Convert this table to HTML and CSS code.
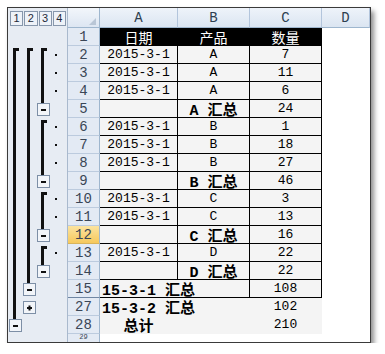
FILE: index.html
```html
<!DOCTYPE html>
<html lang="zh">
<head>
<meta charset="utf-8">
<title>分类汇总</title>
<link rel="stylesheet" href="styles.css">
</head>
<body>
<div class="window">
  <div class="sheet">
    <div class="levels">
      <span class="lvl">1</span><span class="lvl">2</span><span class="lvl">3</span><span class="lvl">4</span>
    </div>
    <div class="corner">
      <svg width="7" height="7" viewBox="0 0 7 7"><polygon points="7,0 7,7 0,7" fill="#b9c6d6"/></svg>
    </div>
    <div class="ch">A</div><div class="ch">B</div><div class="ch">C</div><div class="ch">D</div>

    <div class="outline">
      <svg width="59" height="314" viewBox="0 0 59 314">
        <g fill="#111">
          <rect x="5" y="20" width="3" height="271"/><rect x="5" y="20" width="6" height="3"/>
          <rect x="19" y="20" width="3" height="235"/><rect x="19" y="20" width="6" height="3"/>
          <rect x="33" y="20" width="3" height="56"/><rect x="33" y="20" width="6" height="3"/>
          <rect x="33" y="92" width="3" height="56"/><rect x="33" y="92" width="6" height="3"/>
          <rect x="33" y="164" width="3" height="38"/><rect x="33" y="164" width="6" height="3"/>
          <rect x="33" y="218" width="3" height="20"/><rect x="33" y="218" width="6" height="3"/>
          <rect x="47" y="26" width="2" height="2"/><rect x="47" y="44" width="2" height="2"/><rect x="47" y="62" width="2" height="2"/>
          <rect x="47" y="98" width="2" height="2"/><rect x="47" y="116" width="2" height="2"/><rect x="47" y="134" width="2" height="2"/>
          <rect x="47" y="170" width="2" height="2"/><rect x="47" y="188" width="2" height="2"/>
          <rect x="47" y="224" width="2" height="2"/>
        </g>
        <g fill="#f2f5f9" stroke="#7d8fa6" stroke-width="1">
          <rect x="29.5" y="75.5" width="12" height="12"/>
          <rect x="29.5" y="147.5" width="12" height="12"/>
          <rect x="29.5" y="201.5" width="12" height="12"/>
          <rect x="29.5" y="237.5" width="12" height="12"/>
          <rect x="15.5" y="255.5" width="12" height="12"/>
          <rect x="15.5" y="273.5" width="12" height="12"/>
          <rect x="1.5" y="291.5" width="12" height="12"/>
        </g>
        <g fill="#111">
          <rect x="33" y="81" width="5" height="2"/>
          <rect x="33" y="153" width="5" height="2"/>
          <rect x="33" y="207" width="5" height="2"/>
          <rect x="33" y="243" width="5" height="2"/>
          <rect x="19" y="261" width="5" height="2"/>
          <rect x="19" y="279" width="5" height="2"/><rect x="20.5" y="277.5" width="2" height="5"/>
          <rect x="5" y="297" width="5" height="2"/>
        </g>
      </svg>
    </div>

    <div class="rh">1</div><div class="c hd">日期</div><div class="c hd">产品</div><div class="c hd">数量</div><div class="d"></div>
    <div class="rh">2</div><div class="c">2015-3-1</div><div class="c">A</div><div class="c">7</div><div class="d"></div>
    <div class="rh">3</div><div class="c">2015-3-1</div><div class="c">A</div><div class="c">11</div><div class="d"></div>
    <div class="rh">4</div><div class="c">2015-3-1</div><div class="c">A</div><div class="c">6</div><div class="d"></div>
    <div class="rh">5</div><div class="c"></div><div class="c sum">A 汇总</div><div class="c">24</div><div class="d"></div>
    <div class="rh">6</div><div class="c">2015-3-1</div><div class="c">B</div><div class="c">1</div><div class="d"></div>
    <div class="rh">7</div><div class="c">2015-3-1</div><div class="c">B</div><div class="c">18</div><div class="d"></div>
    <div class="rh">8</div><div class="c">2015-3-1</div><div class="c">B</div><div class="c">27</div><div class="d"></div>
    <div class="rh">9</div><div class="c"></div><div class="c sum">B 汇总</div><div class="c">46</div><div class="d"></div>
    <div class="rh">10</div><div class="c">2015-3-1</div><div class="c">C</div><div class="c">3</div><div class="d"></div>
    <div class="rh">11</div><div class="c">2015-3-1</div><div class="c">C</div><div class="c">13</div><div class="d"></div>
    <div class="rh act">12</div><div class="c"></div><div class="c sum">C 汇总</div><div class="c">16</div><div class="d"></div>
    <div class="rh">13</div><div class="c">2015-3-1</div><div class="c">D</div><div class="c">22</div><div class="d"></div>
    <div class="rh">14</div><div class="c"></div><div class="c sum">D 汇总</div><div class="c">22</div><div class="d"></div>
    <div class="rh hid">15</div><div class="c sum wide">15-3-1 汇总</div><div class="c">108</div><div class="d"></div>
    <div class="rh">27</div><div class="c sum wide nb">15-3-2 汇总</div><div class="c nb">102</div><div class="d"></div>
    <div class="rh">28</div><div class="c sum nb">总计</div><div class="c nb"></div><div class="c nb">210</div><div class="d"></div>
    <div class="rh last">29</div><div class="d"></div><div class="d"></div><div class="d"></div><div class="d"></div>
  </div>
</div>
</body>
</html>
```

FILE: styles.css
```css
html, body {
  margin: 0;
  padding: 0;
  background: #fff;
}

.window {
  margin: 7px 0 0 7px;
  width: 364px;
  height: 336px;
  box-sizing: border-box;
  border: 1px solid #3a3a3a;
  box-shadow: 3px 4px 5px rgba(0, 0, 0, 0.45);
  overflow: hidden;
  background: #fff;
}

.sheet {
  display: grid;
  grid-template-columns: 60px 32px 78px 72px 72px 48px;
  grid-template-rows: 20px repeat(18, 18px);
  font-family: "Liberation Mono", "Noto Sans CJK SC", monospace;
  font-size: 13px;
  color: #000;
}

.levels {
  background: #e7ecf3;
  border-right: 1px solid #a9b9cd;
  display: flex;
  align-items: center;
  padding: 1px 0 0 2px;
  box-sizing: border-box;
}

.lvl {
  width: 12px;
  height: 13px;
  border: 1px solid #8797ac;
  background: #eef2f8;
  font-family: "Liberation Sans", sans-serif;
  font-size: 11px;
  line-height: 13px;
  text-align: center;
  color: #1e2a3a;
  margin-right: 1px;
}

.corner {
  background: linear-gradient(#f2f6fb, #dde6f2);
  border-right: 1px solid #9eb6ce;
  border-bottom: 1px solid #9eb6ce;
  box-sizing: border-box;
  display: flex;
  justify-content: flex-end;
  align-items: flex-end;
  padding: 0 3px 2px 0;
}

.ch {
  background: linear-gradient(#eef3fa, #dbe5f1);
  border-right: 1px solid #b3c5dc;
  border-bottom: 1px solid #9eb6ce;
  box-sizing: border-box;
  display: flex;
  align-items: center;
  justify-content: center;
  font-size: 14px;
  color: #2d3e50;
}

.outline {
  grid-column: 1;
  grid-row: 2 / span 18;
  background: #e7ecf3;
  border-right: 1px solid #a9b9cd;
  box-sizing: border-box;
}

.outline svg {
  display: block;
}

.rh {
  background: #e3eaf4;
  border-right: 1px solid #9eb6ce;
  border-bottom: 1px solid #bccbde;
  box-sizing: border-box;
  display: flex;
  align-items: center;
  justify-content: center;
  font-size: 14px;
  color: #3a4656;
}

.rh.last {
  align-items: flex-start;
  font-size: 7px;
  line-height: 7px;
  padding-top: 0;
}

.rh.act {
  background: linear-gradient(#fbe3a0, #f6c95c);
  border-bottom-color: #d9b45a;
}

.rh.hid {
  border-bottom: 1px solid #6f86a3;
}

.c {
  background: #f4f4f4;
  border-right: 1px solid #000;
  border-bottom: 1px solid #000;
  box-sizing: border-box;
  display: flex;
  align-items: center;
  justify-content: center;
  white-space: nowrap;
}

.c.hd {
  background: #000;
  color: #fff;
  font-family: "Noto Sans CJK SC", sans-serif;
  font-size: 14px;
}

.c.sum {
  font-weight: bold;
  font-size: 15px;
}

.c.wide {
  grid-column: span 2;
  justify-content: flex-start;
  padding-left: 2px;
}

.c.nb {
  border-color: transparent;
}

.d {
  background: #fff;
}
```
